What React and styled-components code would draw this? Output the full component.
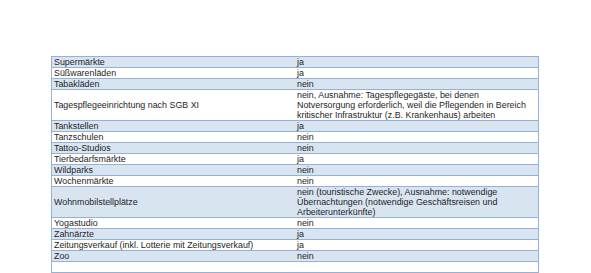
import React from "react";
import styled, { createGlobalStyle } from "styled-components";

const Global = createGlobalStyle`
  html, body { margin: 0; padding: 0; background: #fff; }
  body { font-family: "Liberation Sans", Arial, sans-serif; }
`;

const Page = styled.div`
  padding: 56px 0 0 51px;
`;

const Table = styled.table`
  width: 488px;
  border-collapse: collapse;
  table-layout: fixed;
  border: 1px solid #94b2d6;
  font-size: 8.9px;
  line-height: 10px;
  color: #1e1e1e;
`;

const Row = styled.tr`
  background: ${(p) => (p.$shade ? "#d9e4f1" : "#ffffff")};
  border-bottom: 1px solid #94b2d6;
`;

const Label = styled.td`
  width: 241px;
  padding: 0 0 0 2px;
  vertical-align: middle;
  white-space: nowrap;
`;

const Value = styled.td`
  padding: 0 0 0 2px;
  vertical-align: top;
  white-space: nowrap;
`;

const rows = [
  ["Supermärkte", "ja"],
  ["Süßwarenläden", "ja"],
  ["Tabakläden", "nein"],
  [
    "Tagespflegeeinrichtung nach SGB XI",
    [
      "nein, Ausnahme: Tagespflegegäste, bei denen",
      "Notversorgung erforderlich, weil die Pflegenden in Bereich",
      "kritischer Infrastruktur (z.B. Krankenhaus) arbeiten",
    ],
  ],
  ["Tankstellen", "ja"],
  ["Tanzschulen", "nein"],
  ["Tattoo-Studios", "nein"],
  ["Tierbedarfsmärkte", "ja"],
  ["Wildparks", "nein"],
  ["Wochenmärkte", "nein"],
  [
    "Wohnmobilstellplätze",
    [
      "nein (touristische Zwecke), Ausnahme: notwendige",
      "Übernachtungen (notwendige Geschäftsreisen und",
      "Arbeiterunterkünfte)",
    ],
  ],
  ["Yogastudio", "nein"],
  ["Zahnärzte", "ja"],
  ["Zeitungsverkauf (inkl. Lotterie mit Zeitungsverkauf)", "ja"],
  ["Zoo", "nein"],
  ["\u00a0", "\u00a0"],
];

export default function App() {
  return (
    <Page>
      <Global />
      <Table>
        <tbody>
          {rows.map(([label, value], i) => (
            <Row key={i} $shade={i % 2 === 0}>
              <Label>{label}</Label>
              <Value>
                {Array.isArray(value)
                  ? value.map((line, j) => <div key={j}>{line}</div>)
                  : value}
              </Value>
            </Row>
          ))}
        </tbody>
      </Table>
    </Page>
  );
}
